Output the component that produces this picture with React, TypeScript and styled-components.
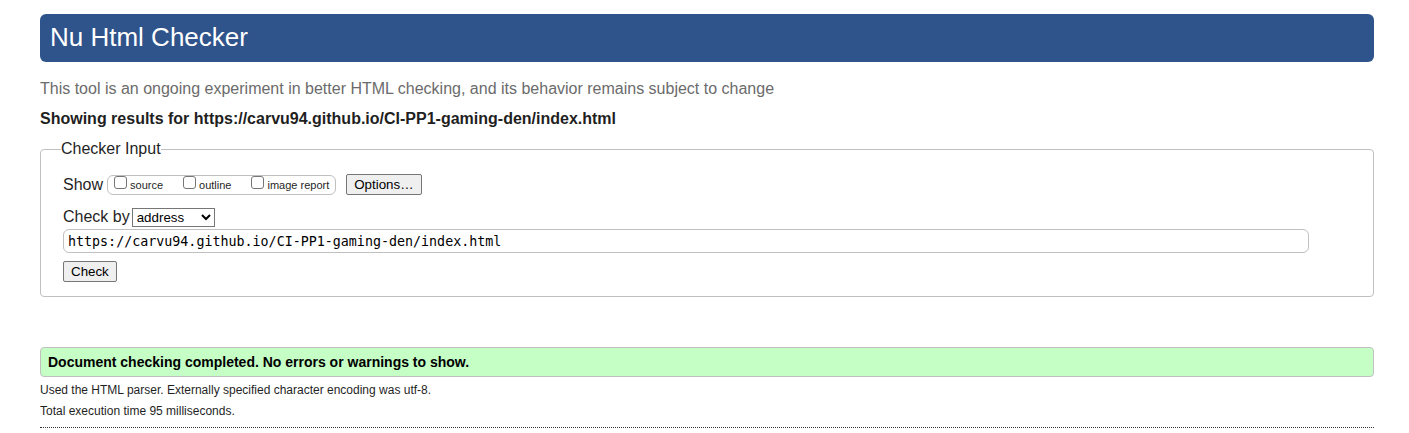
import React from "react";
import styled, { createGlobalStyle } from "styled-components";

const GlobalStyle = createGlobalStyle`
  * { box-sizing: border-box; }
  body {
    margin: 0;
    background: #fff;
    color: #1f1f1f;
    font-family: "Liberation Sans", Arial, sans-serif;
    font-size: 16px;
    line-height: 20px;
  }
`;

const Page = styled.main`
  padding: 14px 35px 0 40px;
`;

const Banner = styled.h1`
  margin: 0;
  padding: 7px 10px 9px;
  border-radius: 6px;
  background: #2f538b;
  color: #fff;
  font-size: 26px;
  font-weight: 400;
  line-height: 32px;
`;

const Notice = styled.p`
  margin: 17px 0 0;
  color: #6b6b6b;
`;

const Heading = styled.h2`
  margin: 10px 0;
  font-size: 16px;
  line-height: 20px;
`;

const Panel = styled.fieldset`
  margin: 0;
  min-width: 0;
  padding: 15px 22px 14px;
  border: 1px solid #c0c0c0;
  border-radius: 4px;
`;

const Legend = styled.legend`
  margin-left: -2px;
  padding: 0;
`;

const ShowRow = styled.div`
  display: flex;
  align-items: flex-end;
`;

const CheckByRow = styled.div`
  display: flex;
  align-items: center;
  gap: 2px;
  margin-top: 12px;
`;

const ShowGroup = styled.div`
  display: flex;
  align-items: center;
  gap: 20px;
  height: 20px;
  margin: 0 10px 0 4px;
  padding: 0 6px;
  border: 1px solid #c0c0c0;
  border-radius: 6px;
`;

const Option = styled.label`
  display: flex;
  align-items: center;
  gap: 3px;
  font-size: 11px;
`;

const Tick = styled.input`
  appearance: none;
  width: 13px;
  height: 13px;
  margin: 0 0 5px;
  border: 1px solid #767676;
  border-radius: 3px;
  background: #fff;
`;

const Button = styled.button`
  display: block;
  height: 21px;
  padding: 0 7px;
  border: 1px solid #767676;
  border-radius: 2px;
  background: #efefef;
  color: #000;
  font-family: inherit;
`;

const Method = styled.select`
  width: 83px;
  height: 19px;
  border: 1px solid #767676;
  border-radius: 0;
  background: #fff;
  color: #000;
  font-family: inherit;
`;

const Address = styled.input`
  display: block;
  box-sizing: content-box;
  width: 96%;
  height: 22px;
  margin: 2px 0 8px;
  padding: 0 4px;
  border: 1px solid #c0c0c0;
  border-radius: 6px;
  color: #000;
  font-family: "DejaVu Sans Mono", monospace;
`;

const Success = styled.p`
  margin: 50px 0 0;
  padding: 4px 7px;
  border: 1px solid #c0c0c0;
  border-radius: 4px;
  background: #c5ffc5;
  color: #000;
  font-size: 14px;
  font-weight: 700;
`;

const Detail = styled.p`
  margin: 6px 0 5px;
  font-size: 12px;
  line-height: 15px;
`;

const Divider = styled.hr`
  margin: 8px 0 0;
  border: 0;
  border-top: 1px dotted #333;
`;

export default function App() {
  return (
    <>
      <GlobalStyle />
      <Page>
        <Banner>Nu Html Checker</Banner>
        <Notice>This tool is an ongoing experiment in better HTML checking, and its behavior remains subject to change</Notice>
        <Heading>Showing results for https://carvu94.github.io/CI-PP1-gaming-den/index.html</Heading>
        <form onSubmit={(e) => e.preventDefault()}>
          <Panel>
            <Legend>Checker Input</Legend>
            <ShowRow>
              Show
              <ShowGroup>
                {["source", "outline", "image report"].map((name) => (
                  <Option key={name}>
                    <Tick type="checkbox" />
                    {name}
                  </Option>
                ))}
              </ShowGroup>
              <Button type="button">Options…</Button>
            </ShowRow>
            <CheckByRow>
              <label htmlFor="method">Check by</label>
              <Method id="method" defaultValue="address">
                <option>address</option>
                <option>file upload</option>
                <option>text input</option>
              </Method>
            </CheckByRow>
            <Address
              type="text"
              aria-label="Address of page to check"
              defaultValue="https://carvu94.github.io/CI-PP1-gaming-den/index.html"
            />
            <Button type="submit">Check</Button>
          </Panel>
        </form>
        <Success>Document checking completed. No errors or warnings to show.</Success>
        <Detail>Used the HTML parser. Externally specified character encoding was utf-8.</Detail>
        <Detail>Total execution time 95 milliseconds.</Detail>
        <Divider />
      </Page>
    </>
  );
}
